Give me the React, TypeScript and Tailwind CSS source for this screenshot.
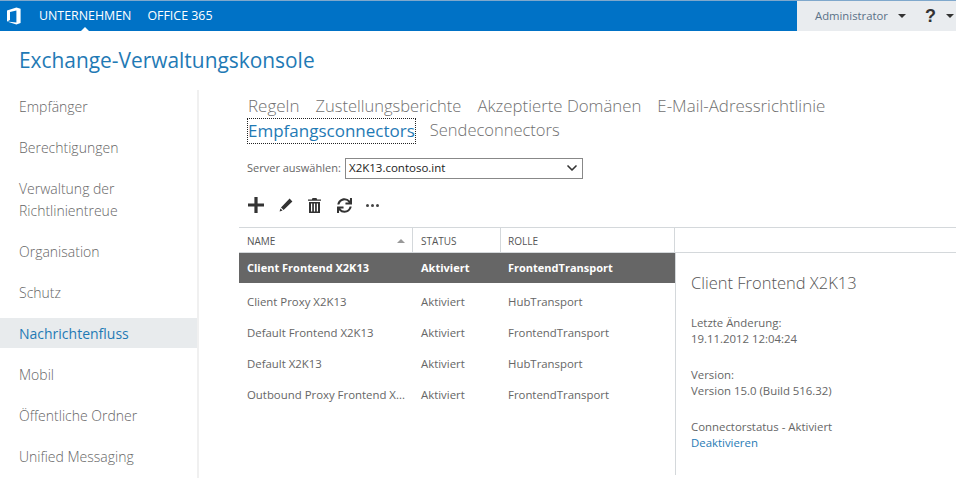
import { ChevronDown } from 'lucide-react';
import { FaSync } from 'react-icons/fa';

const navItems = [
  { label: 'Empfänger' },
  { label: 'Berechtigungen' },
  { label: 'Verwaltung der Richtlinientreue' },
  { label: 'Organisation' },
  { label: 'Schutz' },
  { label: 'Nachrichtenfluss', active: true },
  { label: 'Mobil' },
  { label: 'Öffentliche Ordner' },
  { label: 'Unified Messaging' },
];

const rows = [
  ['Client Proxy X2K13', 'Aktiviert', 'HubTransport'],
  ['Default Frontend X2K13', 'Aktiviert', 'FrontendTransport'],
  ['Default X2K13', 'Aktiviert', 'HubTransport'],
  ['Outbound Proxy Frontend X...', 'Aktiviert', 'FrontendTransport'],
];

function OfficeLogo() {
  return (
    <svg width="16" height="18" viewBox="0 0 16 18" fill="white">
      <path d="M1 3.6 10.4.4 14.6 1.8v14.2L10.4 17.6 1 14.4 10.4 15.4V3.6L4 5v8l-3 1.4z" />
    </svg>
  );
}

function Caret({ className }: { className: string }) {
  return (
    <svg width="8" height="4" viewBox="0 0 8 4" className={className}>
      <path d="M0 0h8L4 4z" fill="currentColor" />
    </svg>
  );
}

function Toolbar() {
  return (
    <div className="mt-[17px] ml-[9px] flex h-[20px] items-center text-[#333]">
      <svg width="16" height="16" viewBox="0 0 16 16" fill="currentColor">
        <path d="M6.400 0h3.200v6.400H16v3.200H9.600V16H6.400V9.600H0V6.400h6.400z" />
      </svg>
      <svg width="14" height="14" viewBox="0 0 14 14" fill="currentColor" className="ml-[15px]">
        <path d="M10.600.6 13.400 3.400 4.600 12 2 9.400zM1.400 10.400l2.200 2.200-3 1z" />
      </svg>
      <svg width="13" height="15" viewBox="0 0 13 15" fill="currentColor" className="ml-[15px]">
        <path d="M4.500 0h4l.6 1.400H13v1.400H0V1.400h3.900zM1 4h11v11H1zM3 5.600v7.800h1.200V5.600zm2.900 0v7.800h1.200V5.600zm2.900 0v7.800H10V5.600z" />
      </svg>
      <FaSync size={15} className="ml-[16px]" />
      <div className="ml-[14px] flex gap-[2px]">
        <span className="h-[3px] w-[3px] rounded-full bg-[#444]" />
        <span className="h-[3px] w-[3px] rounded-full bg-[#444]" />
        <span className="h-[3px] w-[3px] rounded-full bg-[#444]" />
      </div>
    </div>
  );
}

export default function App() {
  return (
    <div className="h-[478px] w-[956px] overflow-hidden bg-white font-['Open_Sans',sans-serif] text-[#666]">
      <header className="flex h-[31px] border-t border-[#7fa8cc] bg-[#0072c6]">
        <div className="flex w-[797px] items-center text-white">
          <div className="ml-[6px] w-[33px]">
            <OfficeLogo />
          </div>
          <div className="relative text-[12.400px]">
            UNTERNEHMEN
            <span className="absolute left-1/2 top-[20px] h-0 w-0 -translate-x-1/2 border-x-[5px] border-b-[5px] border-x-transparent border-b-white" />
          </div>
          <div className="ml-[16px] text-[12.400px]">OFFICE 365</div>
        </div>
        <div className="flex flex-1 items-center bg-[#e9ecef] pl-[18px]">
          <span className="text-[11.300px] text-[#5a7187]">Administrator</span>
          <Caret className="ml-[10px] text-[#333]" />
          <span className="ml-[19px] font-['Liberation_Sans',sans-serif] text-[18px] font-bold leading-none text-[#333]">?</span>
          <Caret className="ml-[10px] text-[#333]" />
        </div>
      </header>

      <h1 className="ml-[19px] mt-[14px] h-[30px] text-[20.900px] font-normal leading-[30px] text-[#1f7ab5]">
        Exchange-Verwaltungskonsole
      </h1>

      <div className="mt-[15px] flex">
        <nav className="flex h-[388px] w-[199px] flex-col gap-[19px] border-r-2 border-[#f0f0f0] pt-[6px] text-[14px] font-light">
          {navItems.map((item) => (
            <div
              key={item.label}
              className={`pl-[19px] pr-[40px] leading-[22px] ${item.active ? '-mt-[5px] -mb-[3px] pt-[5px] pb-[3px] bg-[#e8ebed] font-normal text-[#1f7ab5]' : ''}`}
            >
              {item.label}
            </div>
          ))}
        </nav>

        <main className="flex-1 pl-[40px]">
          <div className="flex flex-wrap pl-[9px] pt-[4px] text-[17px] font-light leading-[24px] text-[#707070]">
            <span className="mr-[16px]">Regeln</span>
            <span className="mr-[16px] text-[16.500px]">Zustellungsberichte</span>
            <span className="mr-[16px] text-[16.800px]">Akzeptierte Domänen</span>
            <span className="text-[16.900px]">E-Mail-Adressrichtlinie</span>
            <span className="-ml-px mr-[14px] border border-dotted border-[#222] font-normal text-[#1f7ab5]">Empfangsconnectors</span>
            <span className="text-[16.500px]">Sendeconnectors</span>
          </div>

          <div className="mt-[14px] ml-[8px] flex h-[20px] items-center text-[11px]">
            <span className="w-[98px]">Server auswählen:</span>
            <div className="flex h-[21px] w-[238px] items-center justify-between border border-[#888] pl-[3px] pr-[2px] text-[11.500px] text-[#222]">
              X2K13.contoso.int
              <ChevronDown size={16} strokeWidth={2.500} className="text-[#333]" />
            </div>
          </div>

          <Toolbar />

          <div className="mt-[12px] flex h-[26px] border-y border-[#d4d8db] text-[10px] uppercase text-[#555]">
            <div className="flex w-[174px] items-center justify-between border-r border-[#d4d8db] pl-[8px] pr-[7px] pt-[2px]">
              Name
              <Caret className="rotate-180 text-[#999]" />
            </div>
            <div className="flex w-[88px] items-center border-r border-[#d4d8db] pl-[8px] pt-[2px]">Status</div>
            <div className="flex w-[174px] items-center border-r border-[#d4d8db] pl-[7px] pt-[2px]">Rolle</div>
          </div>

          <div className="flex">
            <div className="w-[436px] shrink-0 text-[11.400px]">
              <div className="mb-[3px] flex h-[30px] items-center bg-[#666] text-[11px] font-bold text-white">
                <span className="w-[174px] pl-[8px]">Client Frontend X2K13</span>
                <span className="w-[88px] pl-[8px]">Aktiviert</span>
                <span className="pl-[7px]">FrontendTransport</span>
              </div>
              {rows.map((row) => (
                <div key={row[0]} className="flex h-[31px] items-center">
                  <span className="w-[174px] whitespace-nowrap pl-[8px]">{row[0]}</span>
                  <span className="w-[88px] pl-[8px]">{row[1]}</span>
                  <span className="pl-[7px]">{row[2]}</span>
                </div>
              ))}
            </div>
            <aside className="h-[222px] flex-1 border-l border-[#d4d8db] pl-[15px] pt-[18px] text-[11.400px] leading-[16px]">
              <div className="text-[16.500px] font-light leading-[24px] text-[#555]">Client Frontend X2K13</div>
              <div className="mt-[20px]">Letzte Änderung:</div>
              <div>19.11.2012 12:04:24</div>
              <div className="mt-[20px]">Version:</div>
              <div>Version 15.0 (Build 516.32)</div>
              <div className="mt-[20px]">Connectorstatus - Aktiviert</div>
              <div className="text-[#1f7ab5]">Deaktivieren</div>
            </aside>
          </div>
        </main>
      </div>
    </div>
  );
}
